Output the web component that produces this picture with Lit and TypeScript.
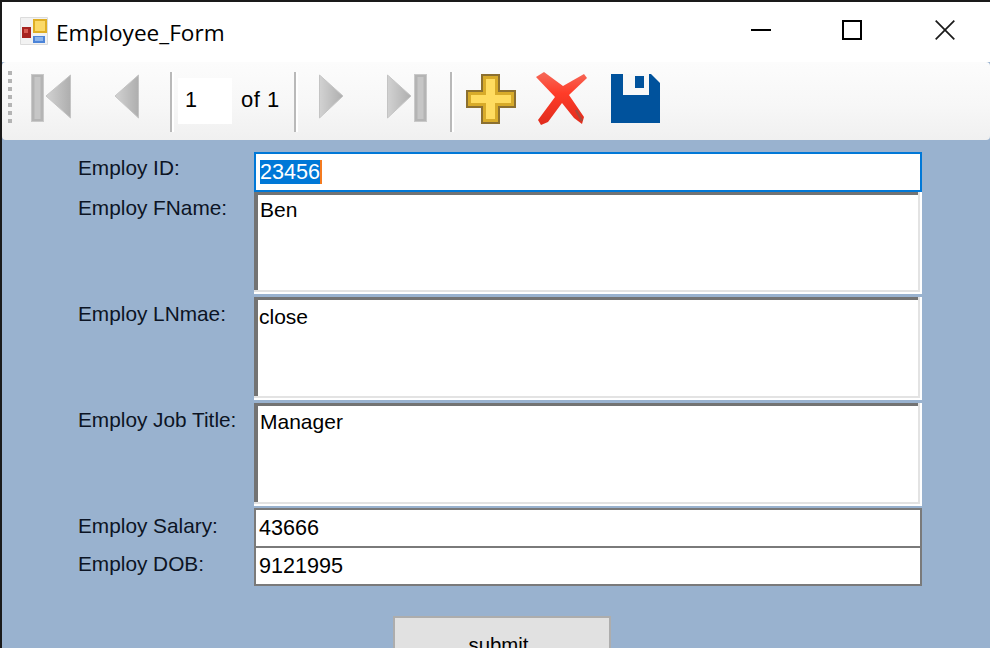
import { LitElement, html, css, svg } from "lit";
import { customElement } from "lit/decorators.js";

const grad = (id: string) => svg`<defs><linearGradient id=${id} x1="0" x2="1" y1="0" y2="0">
  <stop offset="0" stop-color="#d2d2d2"/><stop offset="1" stop-color="#aeaeae"/></linearGradient></defs>`;

@customElement("app-root")
export class AppRoot extends LitElement {
  static styles = css`
    :host { display: block; width: 990px; height: 648px; overflow: hidden; background: #99b2cf; box-sizing: border-box; border-top: 2px solid #1a1a1a; border-left: 2px solid #1a1a1a; font-family: "Liberation Sans", Arial, sans-serif; font-size: 21.6px; color: #000; }
    * { box-sizing: border-box; }
    .titlebar { height: 60px; background: #fff; display: flex; align-items: center; padding-left: 18px; }
    .appicon { width: 28px; height: 28px; flex: none; margin-top: -2px; filter: blur(0.4px); }
    .title { font-family: "Open Sans", sans-serif; font-size: 22.6px; margin-left: 8px; margin-top: 1px; color: #000; }
    .winbtns { margin-left: auto; display: flex; margin-top: -4px; }
    .winbtns svg { width: 20px; height: 20px; display: block; }
    .w1 { margin-right: 71px; } .w2 { margin-right: 73px; } .w3 { margin-right: 35px; }
    .toolbar { height: 78px; background: linear-gradient(#fcfcfc, #f7f7f7 55%, #f0f0f0); border-radius: 4px; display: flex; align-items: flex-start; padding-left: 6px; }
    .grip { width: 4px; margin-top: 9px; display: flex; flex-direction: column; gap: 4px; flex: none; }
    .grip i { display: block; width: 4px; height: 4px; background: #b4b4b4; }
    .toolbar svg { display: block; flex: none; margin-top: 12px; filter: blur(0.5px); overflow: visible; }
    .sep { width: 2px; height: 60px; margin-top: 10px; background: #b9b9b9; box-shadow: 2px 0 0 #fff; flex: none; }
    .pos { width: 54px; height: 46px; background: #fff; margin: 16px 0 0 6px; padding: 10px 0 0 7px; line-height: 24px; flex: none; }
    .of { margin: 26px 0 0 9px; line-height: 24px; width: 53px; flex: none; font-size: 22px; letter-spacing: 0.5px; }
    .i1 { margin-left: 19px; } .i2 { margin-left: 43px; } .s1 { margin-left: 31px; }
    .i3 { margin-left: 23px; } .i4 { margin-left: 43px; } .s3 { margin-left: 23px; }
    .add { margin-left: 14px; } .toolbar svg.del { margin-left: 20px; margin-top: 10px; } .save { margin-left: 23px; }
    .form { padding: 12px 0 0 76px; display: flex; flex-direction: column; }
    .row { display: flex; align-items: flex-start; }
    .lab { width: 176px; flex: none; line-height: 24px; color: #0c1424; padding-top: 5px; font-size: 20.8px; }
    .high { padding-top: 4px; }
    .low { padding-top: 6px; }
    .field { width: 668px; background: #fff; line-height: 24px; color: #000; }
    .single { height: 40px; border: 2px solid #7a7a7a; padding: 6px 0 0 3px; }
    .last { margin-top: -2px; }
    .focus { border-color: #0078d7; padding-left: 4px; }
    .sel { display: inline-block; background: #0078d7; color: #fff; height: 24px; border-right: 2px solid #f47b20; width: 62px; }
    .multi { height: 102px; font-size: 21px; padding: 6px 0 0 5px; box-shadow: inset -2px -2px 0 #fff, inset -4px -4px 0 #e3e3e3, inset 4px 3px 0 #737373; }
    .gapA { margin-top: 3px; } .gapB { margin-top: 2px; }
    .tall { height: 103px; }
    .t8 { padding-top: 8px; } .t7 { padding-top: 7px; }
    .in7 { padding-left: 6px; }
    .btn { width: 218px; height: 70px; margin: 30px 0 0 315px; border: 2px solid #adadad; background: #e1e1e1; text-align: center; padding: 15px 7px 0 0; line-height: 24px; flex: none; font-size: 20.4px; }
  `;

  render() {
    const g = Array.from({ length: 7 }, () => html`<i></i>`);
    return html`
      <div class="titlebar">
        <svg class="appicon" viewBox="0 0 28 28">
          <rect width="28" height="28" rx="1" fill="#dcdcdc"/><rect x="1" y="1" width="26" height="26" fill="#f2f2f2"/>
          <rect x="13" y="2" width="14" height="14" fill="#dfae24"/><rect x="15" y="4" width="10" height="10" fill="#fbd968"/>
          <rect x="2" y="10" width="9" height="11" fill="#a6231f"/><rect x="4" y="12" width="4" height="4" fill="#d85a50"/>
          <rect x="13" y="19" width="12" height="7" fill="#4c84d8"/><rect x="15" y="20" width="8" height="4" fill="#8cb4ec"/>
        </svg>
        <span class="title">Employee_Form</span>
        <div class="winbtns">
          <svg class="w1" viewBox="0 0 20 20"><rect y="9" width="20" height="2" fill="#000"/></svg>
          <svg class="w2" viewBox="0 0 20 20"><rect x="1" y="1" width="18" height="18" fill="none" stroke="#000" stroke-width="2"/></svg>
          <svg class="w3" viewBox="0 0 20 20"><path d="M.7.7 19.3 19.3M19.3.7.7 19.3" stroke="#1a1a1a" stroke-width="1.7"/></svg>
        </div>
      </div>
      <div class="toolbar">
        <div class="grip">${g}</div>
        <svg class="i1" width="40" height="48" viewBox="0 0 40 48">${grad("a")}
          <rect x=".5" y=".5" width="12" height="47" fill="#b4b4b4" stroke="#c9c9c9"/><rect x="3.5" y="3" width="6" height="42" fill="#c6c6c6"/>
          <polygon points="15,22 39.5,1 39.5,44" fill="url(#a)" stroke="#c4c4c4"/></svg>
        <svg class="i2" width="25" height="48" viewBox="0 0 25 48">${grad("b")}<polygon points="1,22 24.5,1 24.5,44" fill="url(#b)" stroke="#c4c4c4"/></svg>
        <div class="sep s1"></div>
        <div class="pos">1</div>
        <div class="of">of 1</div>
        <div class="sep"></div>
        <svg class="i3" width="25" height="48" viewBox="0 0 25 48">${grad("c")}<polygon points=".5,1 24,22 .5,44" fill="url(#c)" stroke="#c4c4c4"/></svg>
        <svg class="i4" width="40" height="48" viewBox="0 0 40 48">${grad("d")}
          <polygon points=".5,1 24,22 .5,44" fill="url(#d)" stroke="#c4c4c4"/>
          <rect x="27.5" y=".5" width="12" height="47" fill="#b4b4b4" stroke="#c9c9c9"/><rect x="30.5" y="3" width="6" height="42" fill="#c6c6c6"/></svg>
        <div class="sep s3"></div>
        <svg class="add" width="50" height="50" viewBox="0 0 50 50">
          <path d="M16 1H33V17H49V33H33V49H16V33H1V17H16Z" fill="#d8ab2a" stroke="#8c7030" stroke-width="2"/>
          <path d="M20 5H29V21H45V29H29V45H20V29H5V21H20Z" fill="#ffdc60"/>
        </svg>
        <svg class="del" width="52" height="54" viewBox="0 0 52 54">
          <defs><linearGradient id="x" x1="0" x2="0" y1="0" y2="1">
            <stop offset="0" stop-color="#f56a5a"/><stop offset=".4" stop-color="#ff3c28"/><stop offset="1" stop-color="#e02c1c"/></linearGradient></defs>
          <polygon points="0,5 8,0 27,14 48,2 51,6 33,23 48,45 46,52 38,46 26,31 12,50 5,53 2,48 19,25" fill="url(#x)"/>
          <path d="M40 38 L46 49" stroke="#a84a3c" stroke-width="2.5"/>
        </svg>
        <svg class="save" width="49" height="50" viewBox="0 0 49 50">
          <path d="M0 0H40L49 9V49H0Z" fill="#00529c"/>
          <rect x="12" y="0" width="26" height="21" fill="#f8f8f8"/>
          <rect x="24" y="2" width="9" height="12" fill="#00529c"/>
        </svg>
      </div>
      <div class="form">
        <div class="row"><div class="lab high">Employ ID:</div><div class="field single focus"><span class="sel">23456</span></div></div>
        <div class="row"><div class="lab high">Employ FName:</div><div class="field multi in7">Ben</div></div>
        <div class="row gapA"><div class="lab">Employ LNmae:</div><div class="field multi tall t8">close</div></div>
        <div class="row gapA"><div class="lab">Employ Job Title:</div><div class="field multi tall t7 in7">Manager</div></div>
        <div class="row gapB"><div class="lab low">Employ Salary:</div><div class="field single">43666</div></div>
        <div class="row last"><div class="lab low">Employ DOB:</div><div class="field single">9121995</div></div>
        <div class="btn">submit</div>
      </div>
    `;
  }
}
